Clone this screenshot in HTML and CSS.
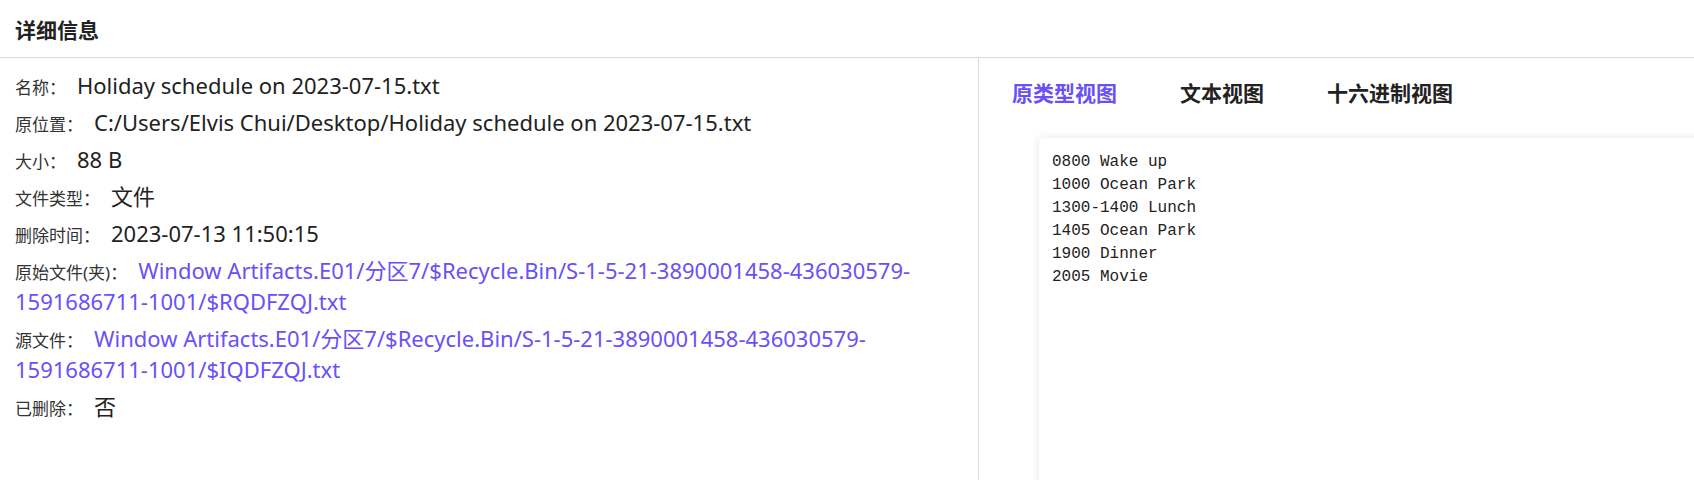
FILE: index.html
```html
<!DOCTYPE html>
<html>
<head>
  <meta charset="UTF-8">
  <link rel="stylesheet" href="styles.css">
</head>
<body>
  <div class="header">
    <div class="header-title">详细信息</div>
  </div>
  <div class="main">
    <div class="info">
      <div class="info-row"><span class="label">名称：</span><span class="value">Holiday schedule on 2023-07-15.txt</span></div>
      <div class="info-row"><span class="label">原位置：</span><span class="value">C:/Users/Elvis Chui/Desktop/Holiday schedule on 2023-07-15.txt</span></div>
      <div class="info-row"><span class="label">大小：</span><span class="value">88 B</span></div>
      <div class="info-row"><span class="label">文件类型：</span><span class="value">文件</span></div>
      <div class="info-row"><span class="label">删除时间：</span><span class="value">2023-07-13 11:50:15</span></div>
      <div class="info-row"><span class="label">原始文件(夹)：</span><a class="value link">Window Artifacts.E01/分区7/$Recycle.Bin/S-1-5-21-3890001458-436030579-1591686711-1001/$RQDFZQJ.txt</a></div>
      <div class="info-row"><span class="label">源文件：</span><a class="value link">Window Artifacts.E01/分区7/$Recycle.Bin/S-1-5-21-3890001458-436030579-1591686711-1001/$IQDFZQJ.txt</a></div>
      <div class="info-row"><span class="label">已删除：</span><span class="value">否</span></div>
    </div>
    <div class="preview">
      <div class="tabs">
        <a class="tab active">原类型视图</a>
        <a class="tab">文本视图</a>
        <a class="tab">十六进制视图</a>
      </div>
      <div class="text-box">
        <pre class="text-content">0800 Wake up
1000 Ocean Park
1300-1400 Lunch
1405 Ocean Park
1900 Dinner
2005 Movie</pre>
      </div>
    </div>
  </div>
</body>
</html>
```

FILE: styles.css
```css
body {
  margin: 0;
  padding: 0;
  background: #fff;
  color: #222;
  font-family: "Noto Sans", "Noto Sans CJK SC", sans-serif;
  overflow: hidden;
}

.header {
  height: 57px;
  display: flex;
  align-items: center;
  padding-left: 15px;
  border-bottom: 1px solid #dcdcdc;
}

.header-title {
  font-size: 21px;
  font-weight: bold;
  color: #222;
}

.main {
  display: flex;
  height: 422px;
}

.info {
  width: 979px;
  box-sizing: border-box;
  padding: 12px 15px 0 15px;
  border-right: 1px solid #dcdcdc;
}

.info-row {
  font-size: 22px;
  line-height: 31px;
  margin-bottom: 6px;
}

.label {
  font-size: 17px;
  line-height: 1;
  color: #333;
}

.value {
  color: #222;
  margin-left: 11px;
}

.link {
  color: #6950f7; /* link purple */
  cursor: pointer;
}

.preview {
  flex: 1;
  overflow: hidden;
  padding-left: 33px;
}

.tabs {
  display: flex;
  gap: 63px;
  padding-top: 20px;
  line-height: 30px;
}

.tab {
  font-size: 21px;
  font-weight: bold;
  color: #222;
  cursor: pointer;
}

.tab.active {
  color: #6950f7;
}

.text-box {
  margin-top: 30px;
  margin-left: 27px;
  width: 720px;
  height: 400px;
  padding: 13px 13px;
  box-sizing: border-box;
  border-radius: 4px;
  box-shadow: 0 0 8px rgba(0, 0, 0, 0.1);
}

.text-content {
  margin: 0;
  font-family: "Liberation Mono", monospace;
  font-size: 16px;
  line-height: 23px;
  color: #222;
}
```
